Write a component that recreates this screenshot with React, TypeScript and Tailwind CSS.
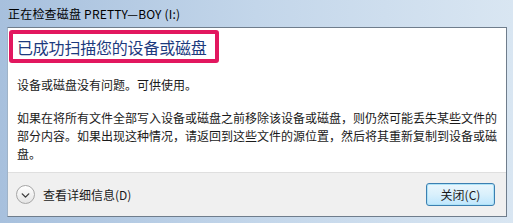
import { ChevronDown } from "lucide-react";

const font = { fontFamily: '"Noto Sans CJK SC", "Liberation Sans", sans-serif' };

export default function App() {
  return (
    <div
      className="w-[513px] h-[223px] flex flex-col bg-gradient-to-r from-[#a7c0dd] via-[#c3d6ea] to-[#d9e6f2] pl-[7px] pr-[6px] pb-[6px] text-[12px] text-black overflow-hidden"
      style={font}
    >
      {/* 标题栏 */}
      <div className="h-[27px] flex items-center pl-[1px] leading-none">
        <span className="text-[12px] tracking-[0.2px]">正在检查磁盘 PRETTY—BOY (I:)</span>
      </div>

      <div className="flex-1 flex flex-col border border-[#6f7d8c] border-l-[#9fb3c8] bg-white">
        <div className="flex-1 flex flex-col">
          <div className="ml-[1px] mt-[2px] w-[210px] h-[33px] border-[4px] border-[#e2175f] rounded-[3px] flex items-center pl-[4px]">
            <span className="text-[16px] leading-none text-[#1c3a7e] tracking-[-0.2px]">已成功扫描您的设备或磁盘</span>
          </div>
          <div className="pl-[9px] pt-[13px] leading-[17px] text-[#1a1a1a] whitespace-nowrap">
            <p>设备或磁盘没有问题。可供使用。</p>
            <p className="mt-[16px] leading-[18px]">
              如果在将所有文件全部写入设备或磁盘之前移除该设备或磁盘，则仍然可能丢失某些文件的
              <br />
              部分内容。如果出现这种情况，请返回到这些文件的源位置，然后将其重新复制到设备或磁
              <br />
              盘。
            </p>
          </div>
        </div>

        {/* 底部 */}
        <div className="h-[44px] shrink-0 bg-[#f0f0f0] border-t border-[#dfdfdf] flex items-center pl-[8px] pr-[11px]">
          <div className="w-[19px] h-[19px] rounded-full border border-[#a6a6a6] bg-gradient-to-b from-white to-[#e4e4e4] flex items-center justify-center">
            <ChevronDown size={13} strokeWidth={2.6} className="text-[#3d3d3d] mt-[1px]" />
          </div>
          <span className="ml-[8px] text-[#1a1a1a]">查看详细信息(D)</span>
          <div className="flex-1" />
          <button className="w-[69px] h-[23px] rounded-[3px] border border-[#3c7fb1] bg-gradient-to-b from-[#eaf6fd] via-[#d9f0fc] to-[#bee6fd] shadow-[inset_0_0_0_1px_#aee3f7] text-[12px] leading-none text-[#1a1a1a]">
            关闭(C)
          </button>
        </div>
      </div>
    </div>
  );
}
